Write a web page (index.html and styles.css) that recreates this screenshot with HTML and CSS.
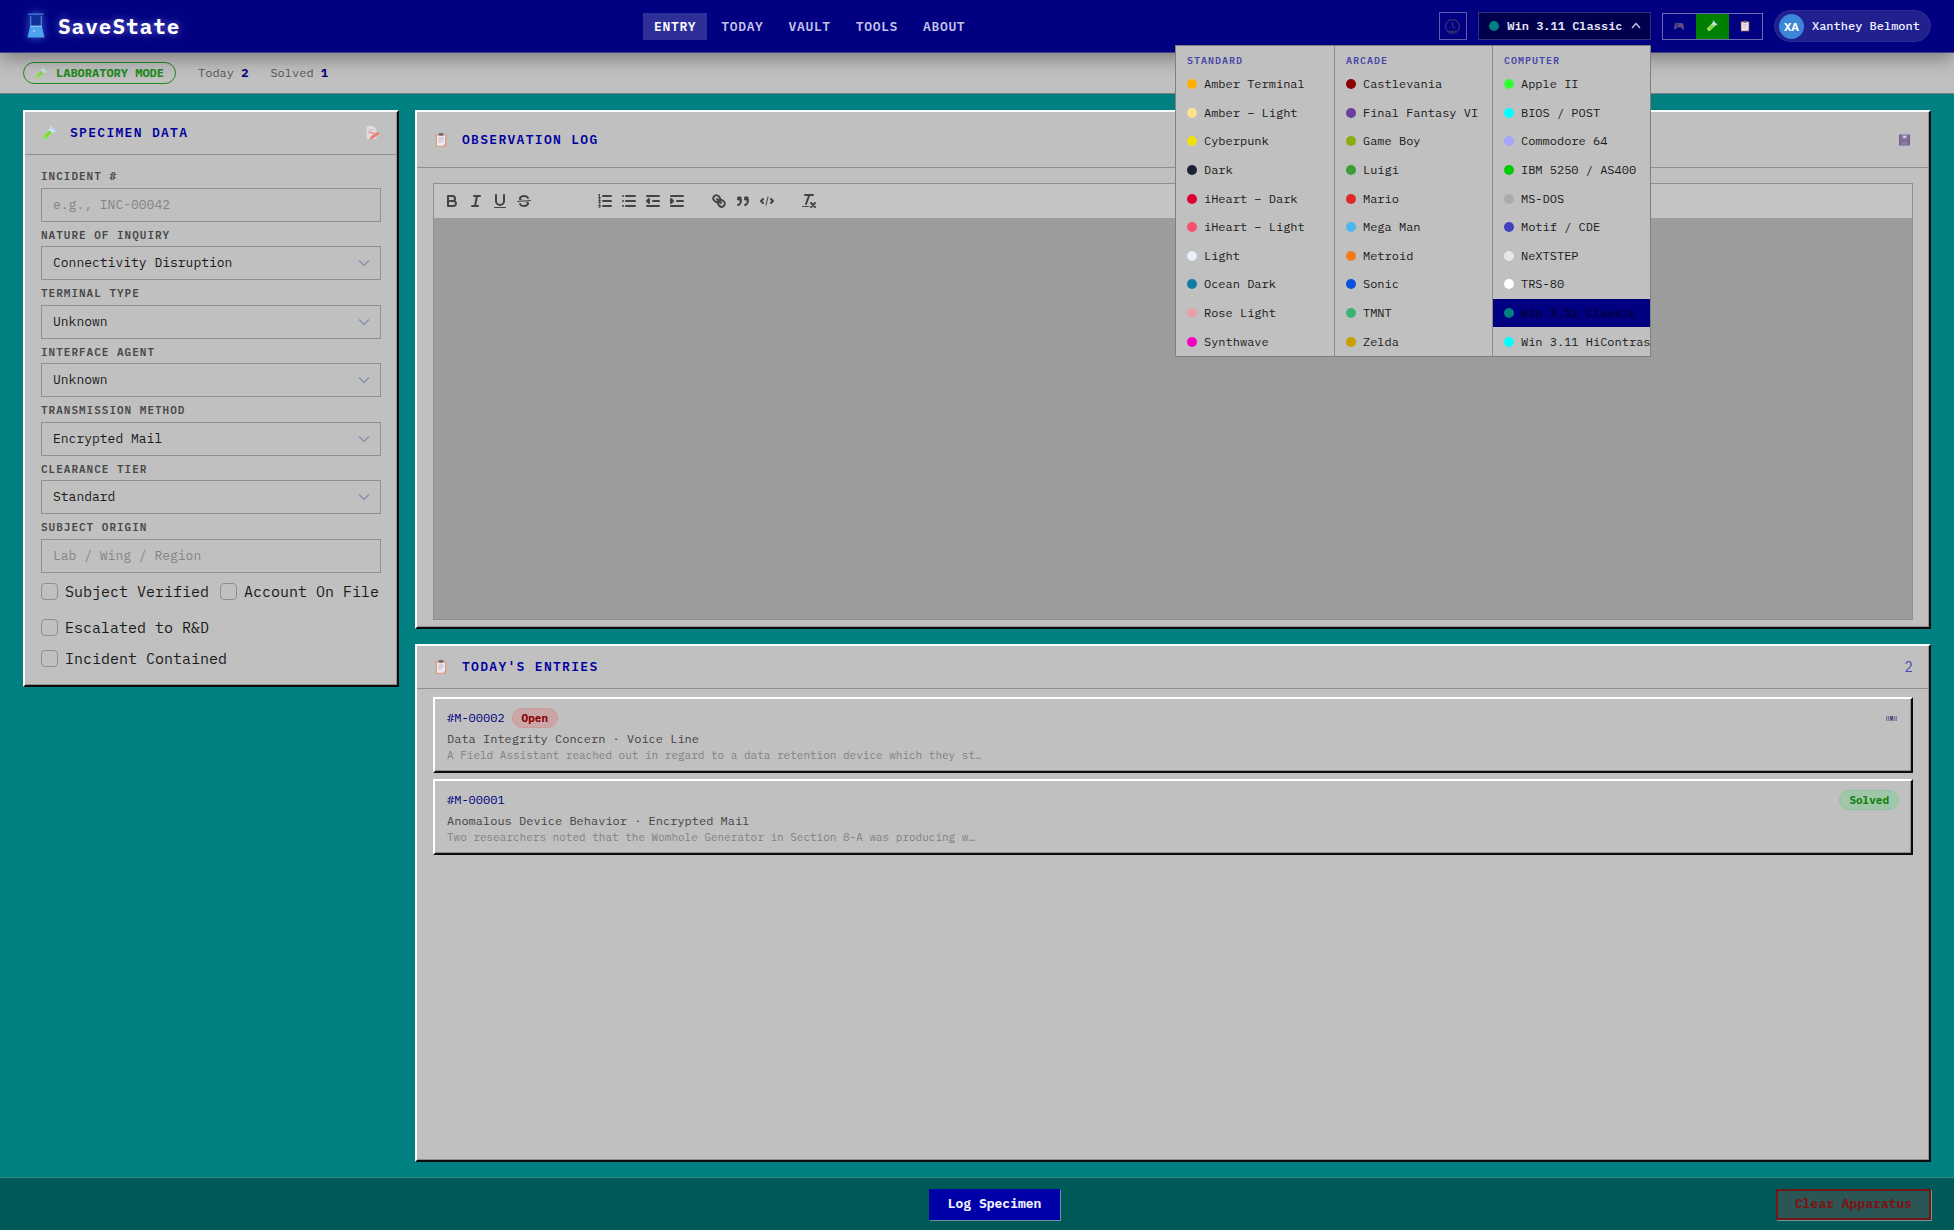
FILE: index.html
```html
<!DOCTYPE html>
<html lang="en">
<head>
<meta charset="utf-8">
<meta name="viewport" content="width=device-width, initial-scale=1">
<title>SaveState</title>
<link rel="stylesheet" href="styles.css">
</head>
<body>
<svg class="defs" aria-hidden="true">
  <symbol id="i-tube" viewBox="0 0 16 16">
    <path d="M10 2.2 13.8 6l-8 7.6a2.3 2.3 0 0 1-3.4-3.2z" fill="#c9e6ee"/>
    <path d="M7.4 5.6l4.2 2.6-5.8 5.4a2.3 2.3 0 0 1-3.4-3.2z" fill="#8fe04a"/>
    <path d="M9.6 1.6l4.8 4.8" stroke="#b8dcec" stroke-width="1.6" stroke-linecap="round"/>
    <path d="M5 9.4l.8.8M6.8 7.8l.8.8M8.6 6.2l.8.8" stroke="#39782a" stroke-width="1"/>
  </symbol>
  <symbol id="i-clip" viewBox="0 0 16 16">
    <rect x="2.5" y="2" width="11" height="13" rx="1" fill="#dda387"/>
    <path d="M4 3.4h8v8.4l-1.8 2H4z" fill="#ece6f2"/>
    <rect x="5.6" y="1" width="4.8" height="2.8" rx="1" fill="#6d6780"/>
    <path d="M5.4 6h5.2M5.4 8h5.2M5.4 10h3.4" stroke="#b9a9cc" stroke-width=".8"/>
  </symbol>
  <symbol id="i-memo" viewBox="0 0 16 16">
    <path d="M1.500 1h6.500l3.500 3.500v9.500h-10z" fill="#dedae2"/>
    <path d="M3.500 5h5" stroke="#c3b6cc" stroke-width=".8"/>
    <path d="M12.800 6.800l1.600 1.900-6.600 5-3.300.9 1.300-3z" fill="#ef8069"/>
    <path d="M3.500 6.800l7.500 2.400" stroke="#e78e7d" stroke-width="1.400"/>
  </symbol>
  <symbol id="i-pad" viewBox="0 0 16 16">
    <path d="M4.500 4h7c1.400 0 2 .9 2.300 2.400l1 4.600c.3 1.700-1.600 2.200-2.500.9L10.900 10H5.100l-1.400 1.900c-.9 1.300-2.800.8-2.500-.9l1-4.600C2.500 4.900 3.100 4 4.500 4z" fill="#564a86"/>
    <path d="M5.200 5.700v2.600M3.900 7h2.600" stroke="#252052" stroke-width=".9"/>
    <circle cx="10.300" cy="7.700" r=".8" fill="#9a4770"/><circle cx="11.700" cy="6.300" r=".8" fill="#9a4770"/>
  </symbol>
</svg>

<header class="topbar">
  <a class="brand" href="#">
    <svg class="flask" viewBox="0 0 20 28" aria-hidden="true">
      <path d="M3 2h14l-1.500 1.800V13l3 12.500h-17L4.500 13V3.800z" fill="#12309c"/>
      <path d="M4.200 14.200h11.600l2.700 11.300h-17z" fill="#4da3ee"/>
      <path d="M4.200 14.200h11.600" stroke="#8fd0ff" stroke-width="1.200"/>
      <path d="M2 2.200h15.500M4.700 4v9.500M15.300 4v9.500" stroke="#4f80d6" stroke-width="1.200"/>
      <circle cx="8" cy="19" r="1" fill="#9bd6ff"/>
    </svg>
    <span>SaveState</span>
  </a>
  <nav class="nav">
    <a class="active" href="#">ENTRY</a>
    <a href="#">TODAY</a>
    <a href="#">VAULT</a>
    <a href="#">TOOLS</a>
    <a href="#">ABOUT</a>
  </nav>
  <div class="tools">
    <button class="clock" type="button" aria-label="Clock">
      <svg viewBox="0 0 18 18" fill="none" stroke="#34346c" stroke-width="1.300"><circle cx="9" cy="9" r="7.300"/><path d="M9 4.500V9l2.800 2"/><path d="M4 14.500h10M6 13v3M9 13v3M12 13v3" stroke-width="1.100"/></svg>
    </button>
    <div class="theme">
      <button class="theme-btn" type="button" aria-expanded="true">
        <span class="dot win"></span><span>Win 3.11 Classic</span>
        <svg viewBox="0 0 10 10" fill="none" stroke="#c8c8e8" stroke-width="1.300" aria-hidden="true"><path d="M1 7l4-4.500L9 7"/></svg>
      </button>
      <div class="menu">
        <section>
          <h2>STANDARD</h2>
          <ul>
            <li><button type="button"><span class="dot" style="background:#ffb000"></span>Amber Terminal</button></li>
            <li><button type="button"><span class="dot" style="background:#ffe08a"></span>Amber – Light</button></li>
            <li><button type="button"><span class="dot" style="background:#f0e010"></span>Cyberpunk</button></li>
            <li><button type="button"><span class="dot" style="background:#1a2236"></span>Dark</button></li>
            <li><button type="button"><span class="dot" style="background:#dc0032"></span>iHeart – Dark</button></li>
            <li><button type="button"><span class="dot" style="background:#fa506e"></span>iHeart – Light</button></li>
            <li><button type="button"><span class="dot" style="background:#e8eef6"></span>Light</button></li>
            <li><button type="button"><span class="dot" style="background:#0e7da6"></span>Ocean Dark</button></li>
            <li><button type="button"><span class="dot" style="background:#e8a0a8"></span>Rose Light</button></li>
            <li><button type="button"><span class="dot" style="background:#f500c0"></span>Synthwave</button></li>
          </ul>
        </section>
        <section>
          <h2>ARCADE</h2>
          <ul>
            <li><button type="button"><span class="dot" style="background:#8b0000"></span>Castlevania</button></li>
            <li><button type="button"><span class="dot" style="background:#6b3fa0"></span>Final Fantasy VI</button></li>
            <li><button type="button"><span class="dot" style="background:#8bac0f"></span>Game Boy</button></li>
            <li><button type="button"><span class="dot" style="background:#3a9d35"></span>Luigi</button></li>
            <li><button type="button"><span class="dot" style="background:#e02828"></span>Mario</button></li>
            <li><button type="button"><span class="dot" style="background:#4ab8ec"></span>Mega Man</button></li>
            <li><button type="button"><span class="dot" style="background:#f57a1a"></span>Metroid</button></li>
            <li><button type="button"><span class="dot" style="background:#0a50dc"></span>Sonic</button></li>
            <li><button type="button"><span class="dot" style="background:#3cb371"></span>TMNT</button></li>
            <li><button type="button"><span class="dot" style="background:#c8a000"></span>Zelda</button></li>
          </ul>
        </section>
        <section>
          <h2>COMPUTER</h2>
          <ul>
            <li><button type="button"><span class="dot" style="background:#33ff33"></span>Apple II</button></li>
            <li><button type="button"><span class="dot" style="background:#00ffff"></span>BIOS / POST</button></li>
            <li><button type="button"><span class="dot" style="background:#a5a5ff"></span>Commodore 64</button></li>
            <li><button type="button"><span class="dot" style="background:#00cc00"></span>IBM 5250 / AS400</button></li>
            <li><button type="button"><span class="dot" style="background:#aaaaaa"></span>MS-DOS</button></li>
            <li><button type="button"><span class="dot" style="background:#4040c0"></span>Motif / CDE</button></li>
            <li><button type="button"><span class="dot" style="background:#e8e8e8"></span>NeXTSTEP</button></li>
            <li><button type="button"><span class="dot" style="background:#ffffff"></span>TRS-80</button></li>
            <li><button type="button" class="selected"><span class="dot win"></span>Win 3.11 Classic</button></li>
            <li><button type="button"><span class="dot" style="background:#00ffff"></span>Win 3.11 HiContrast</button></li>
          </ul>
        </section>
      </div>
    </div>
    <div class="modes">
      <button type="button" aria-label="Arcade mode"><svg><use href="#i-pad"/></svg></button>
      <button type="button" class="on" aria-label="Laboratory mode"><svg><use href="#i-tube"/></svg></button>
      <button type="button" aria-label="Clipboard mode"><svg><use href="#i-clip"/></svg></button>
    </div>
    <button class="user" type="button"><span class="avatar">XA</span><span>Xanthey Belmont</span></button>
  </div>
</header>

<div class="status">
  <span class="mode"><svg aria-hidden="true"><use href="#i-tube"/></svg>LABORATORY MODE</span>
  <span class="stat">Today <b>2</b></span>
  <span class="stat">Solved <b>1</b></span>
</div>

<main class="main">
  <form class="panel specimen">
    <div class="panel-head">
      <h1><svg aria-hidden="true"><use href="#i-tube"/></svg>SPECIMEN DATA</h1>
      <svg aria-hidden="true"><use href="#i-memo"/></svg>
    </div>
    <div class="fields">
      <div class="field"><label for="inc">INCIDENT #</label><input id="inc" type="text" placeholder="e.g., INC-00042"></div>
      <div class="field"><label for="nat">NATURE OF INQUIRY</label><select id="nat"><option>Connectivity Disruption</option></select></div>
      <div class="field"><label for="ter">TERMINAL TYPE</label><select id="ter"><option>Unknown</option></select></div>
      <div class="field"><label for="age">INTERFACE AGENT</label><select id="age"><option>Unknown</option></select></div>
      <div class="field"><label for="tra">TRANSMISSION METHOD</label><select id="tra"><option>Encrypted Mail</option></select></div>
      <div class="field"><label for="cle">CLEARANCE TIER</label><select id="cle"><option>Standard</option></select></div>
      <div class="field"><label for="ori">SUBJECT ORIGIN</label><input id="ori" type="text" placeholder="Lab / Wing / Region"></div>
    </div>
    <div class="checks">
      <label><input type="checkbox">Subject Verified</label>
      <label><input type="checkbox">Account On File</label>
      <label><input type="checkbox">Escalated to R&amp;D</label>
    </div>
    <div class="checks last">
      <label><input type="checkbox">Incident Contained</label>
    </div>
  </form>

  <div class="column">
    <section class="panel log">
      <div class="panel-head tall">
        <h1><svg aria-hidden="true"><use href="#i-clip"/></svg>OBSERVATION LOG</h1>
        <svg viewBox="0 0 16 16" aria-hidden="true"><rect x="2" y="2.500" width="11" height="11" rx=".6" fill="#75658c"/><rect x="4.500" y="3" width="6" height="4.500" fill="#8f81a6"/><rect x="6.200" y="3.800" width="3" height="1.800" fill="#e4deee"/><path d="M4 9h7v4.500H4z" fill="#8779a0"/></svg>
      </div>
      <div class="editor">
        <div class="toolbar">
          <div class="group">
            <button type="button" aria-label="Bold"><svg viewBox="0 0 18 18"><path d="M5,4H9.500A2.500,2.500,0,0,1,12,6.500v0A2.500,2.500,0,0,1,9.500,9H5V4Z"/><path d="M5,9h5.500A2.500,2.500,0,0,1,13,11.500v0A2.500,2.500,0,0,1,10.500,14H5V9Z"/></svg></button>
            <button type="button" aria-label="Italic"><svg viewBox="0 0 18 18"><path d="M7 4h6M5 14h6M8 14l2-10"/></svg></button>
            <button type="button" aria-label="Underline"><svg viewBox="0 0 18 18"><path d="M5,3V9a4,4,0,0,0,4,4H9a4,4,0,0,0,4-4V3"/><rect class="f" x="3" y="15" width="12" height="1" rx=".5"/></svg></button>
            <button type="button" aria-label="Strike"><svg viewBox="0 0 18 18"><path class="t" d="M15.500 8.500L2.500 9.500"/><path class="f" d="M9.007,8C6.542,7.791,6,7.519,6,6.500,6,5.792,7.283,5,9,5c1.571,0,2.765.679,2.969,1.309a1,1,0,0,0,1.900-.617C13.356,4.106,11.354,3,9,3,6.200,3,4,4.538,4,6.500a3.200,3.200,0,0,0,.5,1.843Z"/><path class="f" d="M8.984,10C11.457,10.208,12,10.479,12,11.500c0,.708-1.283,1.500-3,1.500-1.571,0-2.765-.679-2.969-1.309a1,1,0,1,0-1.900.617C4.644,13.894,6.646,15,9,15c2.800,0,5-1.538,5-3.500a3.200,3.200,0,0,0-.5-1.843Z"/></svg></button>
          </div>
          <div class="group blank"></div>
          <div class="group">
            <button type="button" aria-label="Ordered list"><svg viewBox="0 0 18 18"><path d="M7 4h8M7 9h8M7 14h8"/><path d="M3.500 3v11" class="n"/><path class="t" d="M2.300 3l1.200-.6V6M2.500 5.800h2M4.500,10.500h-2c0-.234,1.850-1.076,1.850-2.234A.959,.959,0,0,0,2.500,8.156M2.500,14.846a.959,.959,0,0,0,1.850-.109A.7,.7,0,0,0,3.750,14a.688,.688,0,0,0,.6-.736,.959,.959,0,0,0-1.850-.109"/></svg></button>
            <button type="button" aria-label="Bullet list"><svg viewBox="0 0 18 18"><path d="M6 4h9M6 9h9M6 14h9M3 4h0M3 9h0M3 14h0"/></svg></button>
            <button type="button" aria-label="Outdent"><svg viewBox="0 0 18 18"><path d="M3 14h12M3 4h12M9 9h6M5 7v4L3 9z"/></svg></button>
            <button type="button" aria-label="Indent"><svg viewBox="0 0 18 18"><path d="M3 14h12M3 4h12M9 9h6M3 7v4l2-2z"/></svg></button>
          </div>
          <div class="group">
            <button type="button" aria-label="Link"><svg viewBox="0 0 18 18"><path d="M7 7l4 4M8.900,4.577a3.476,3.476,0,0,1,.36,4.679A3.476,3.476,0,0,1,4.577,8.900C3.185,7.500,2.035,6.400,4.217,4.217S7.500,3.185,8.900,4.577ZM13.423,9.100a3.476,3.476,0,0,0-4.679-.36,3.476,3.476,0,0,0,.36,4.679c1.392,1.392,2.500,2.542,4.679.36S14.815,10.500,13.423,9.100Z"/></svg></button>
            <button type="button" aria-label="Quote"><svg viewBox="0 0 18 18"><path class="q" d="M4 5h3v3H4zM11 5h3v3h-3z"/><path d="M7,8c0,4.031-3,5-3,5M14,8c0,4.031-3,5-3,5"/></svg></button>
            <button type="button" aria-label="Code"><svg viewBox="0 0 18 18"><path d="M5 7L3 9l2 2M13 7l2 2-2 2"/><path class="t" d="M10 5L8 13"/></svg></button>
          </div>
          <div class="group">
            <button type="button" aria-label="Clear formatting"><svg viewBox="0 0 18 18"><path d="M5 3h8M6 12L9.350 3M11 11l4 4M15 11l-4 4"/><rect class="f" x="2" y="14" width="7" height="1" rx=".5"/></svg></button>
          </div>
        </div>
        <textarea class="pad" aria-label="Observation log"></textarea>
      </div>
    </section>

    <section class="panel entries">
      <div class="panel-head">
        <h1><svg aria-hidden="true"><use href="#i-clip"/></svg>TODAY'S ENTRIES</h1>
        <span class="count">2</span>
      </div>
      <div class="list">
        <article class="card">
          <div class="card-top"><span class="id">#M-00002</span><span class="badge open">Open</span>
            <svg class="tail" viewBox="0 0 14 14" aria-hidden="true"><rect x="1" y="5" width="11" height="5" fill="#85799a"/><path d="M2.500 5v5M4.500 5v5M8.500 5v5M10.500 5v5" stroke="#b0a6c0" stroke-width=".8"/><path d="M5.500 5.500L6.500 9l1-3.500" stroke="#3f3654" stroke-width="1" fill="none"/></svg>
          </div>
          <p class="meta">Data Integrity Concern · Voice Line</p>
          <p class="text">A Field Assistant reached out in regard to a data retention device which they st…</p>
        </article>
        <article class="card">
          <div class="card-top"><span class="id">#M-00001</span><span class="badge solved tail">Solved</span></div>
          <p class="meta">Anomalous Device Behavior · Encrypted Mail</p>
          <p class="text">Two researchers noted that the Womhole Generator in Section 8-A was producing w…</p>
        </article>
      </div>
    </section>
  </div>
</main>

<footer class="footer">
  <span class="note"></span>
  <button class="btn primary" type="button">Log Specimen</button>
  <button class="btn danger" type="button">Clear Apparatus</button>
</footer>
</body>
</html>
```
FILE: styles.css
```css
* { box-sizing: border-box; }

body {
  margin: 0;
  min-height: 100vh;
  display: flex;
  flex-direction: column;
  background: #008080;
  color: #1a1a1a;
  font: 12px/16px "IBM Plex Mono", "Liberation Mono", monospace;
}

button, input, select, textarea { font: inherit; color: inherit; margin: 0; }
button { border: 0; padding: 0; background: none; }
h1, h2, p, ul { margin: 0; padding: 0; }
ul { list-style: none; }
a { color: inherit; text-decoration: none; }
svg { display: block; flex: none; }
.defs { position: absolute; width: 0; height: 0; }

/* Top bar */
.topbar {
  position: relative;
  z-index: 2;
  display: flex;
  align-items: center;
  justify-content: space-between;
  height: 53px;
  padding: 0 23px;
  background: #000080;
  border-bottom: 1px solid #404080;
  box-shadow: 0 4px 20px rgba(0, 0, 0, .4);
}
.brand {
  display: flex;
  align-items: center;
  gap: 12px;
  padding-left: 3px;
  color: #fff;
  font-size: 21px;
  line-height: 28px;
  font-weight: 700;
  letter-spacing: 1px;
  text-shadow: 0 0 8px rgba(160, 160, 255, .7);
}
.flask { width: 20px; height: 28px; filter: drop-shadow(0 0 4px rgba(90, 160, 255, .6)); }
.nav { display: flex; gap: 3px; }
.nav a {
  padding: 5px 11px;
  color: #c2c2ea;
  font-size: 13px;
  line-height: 17px;
  font-weight: 600;
  letter-spacing: .05em;
}
.nav .active { background: #2e2e98; color: #fff; }
.tools { display: flex; align-items: center; gap: 11px; }
.clock {
  display: grid;
  place-items: center;
  width: 28px;
  height: 28px;
  border: 1px solid #5a5aa8;
}
.clock svg { width: 17px; height: 17px; }
.theme { position: relative; }
.theme-btn {
  display: flex;
  align-items: center;
  justify-content: space-between;
  width: 173px;
  height: 28px;
  padding: 0 9px 0 10px;
  border: 1px solid #30307c;
  background: #00004e;
  color: #e8e8f8;
  font-weight: 600;
}
.theme-btn svg { width: 10px; height: 10px; }
.dot { width: 10px; height: 10px; flex: none; border-radius: 50%; }
.dot.win { background: #008080; }
.modes { display: flex; border: 1px solid #6a6ab0; }
.modes button { display: grid; place-items: center; width: 33px; height: 25px; }
.modes svg { width: 12px; height: 12px; }
.modes .on { background: #008000; }
.user {
  display: flex;
  align-items: center;
  gap: 8px;
  height: 32px;
  padding: 0 10px 0 4px;
  border: 1px solid #2c2c98;
  border-radius: 16px;
  background: #20208e;
  color: #f0f0ff;
  font-weight: 500;
}
.avatar {
  width: 25px;
  border-radius: 50%;
  background: #3b86d8;
  color: #fff;
  font: 700 11px/25px "Noto Sans", sans-serif;
  text-align: center;
}

/* Theme menu */
.menu {
  position: absolute;
  top: 33px;
  right: 0;
  display: grid;
  grid-template-columns: repeat(3, 158px);
  min-height: 312px;
  overflow: hidden;
  border: 1px solid #808080;
  background: #c0c0c0;
  color: #1a1a1a;
}
.menu section { display: flex; flex-direction: column; overflow: hidden; }
.menu section + section { border-left: 1px solid #8c8c8c; }
.menu h2 {
  padding: 8px 11px 2px;
  color: #4646a8;
  font-size: 10px;
  line-height: 14px;
  font-weight: 600;
  letter-spacing: 1px;
}
.menu ul { flex: 1; display: grid; grid-auto-rows: 1fr; }
.menu li { display: flex; }
.menu button {
  flex: 1;
  display: flex;
  align-items: center;
  gap: 7px;
  padding: 0 11px;
  white-space: nowrap;
}
.menu .selected { background: #000080; color: #00003c; font-weight: 600; }

/* Status strip */
.status {
  display: flex;
  align-items: center;
  gap: 22px;
  height: 41px;
  padding: 0 23px;
  background: #c0c0c0;
  border-bottom: 1px solid #808080;
  color: #555;
}
.mode {
  display: flex;
  align-items: center;
  gap: 8px;
  padding: 2px 11px 2px 10px;
  border: 1px solid #1f8a1f;
  border-radius: 11px;
  color: #1f8a1f;
  font-weight: 700;
}
.mode svg { width: 14px; height: 14px; opacity: .8; }
.stat b { color: #000080; }

/* Layout */
.main {
  flex: 1;
  display: grid;
  grid-template-columns: 376px minmax(0, 1fr);
  gap: 16px;
  padding: 16px 23px 15px;
}
.column { display: grid; grid-template-rows: 1fr 1fr; gap: 15px; }
.panel {
  display: flex;
  flex-direction: column;
  border: 2px solid;
  border-color: #fff #0c0c0c #0c0c0c #fff;
  background: #c0c0c0;
  box-shadow: inset -1px -1px #909090;
}
.panel-head {
  display: flex;
  align-items: center;
  justify-content: space-between;
  min-height: 43px;
  padding: 0 16px;
  border-bottom: 1px solid #909090;
}
.panel-head.tall { min-height: 56px; }
.panel-head h1 {
  display: flex;
  align-items: center;
  gap: 13px;
  color: #0000a0;
  font-size: 13px;
  line-height: 20px;
  font-weight: 600;
  letter-spacing: .1em;
}
.panel-head svg { width: 16px; height: 16px; }

/* Specimen form */
.specimen { align-self: start; padding-bottom: 15px; }
.fields { display: flex; flex-direction: column; gap: 6px; padding: 14px 16px 8px; }
.field { display: flex; flex-direction: column; gap: 4px; }
.field label {
  color: #484848;
  font-size: 11px;
  line-height: 1.32;
  font-weight: 600;
  letter-spacing: 1px;
}
.field input, .field select {
  width: 100%;
  height: 34px;
  padding: 0 11px;
  border: 1px solid #909090;
  border-radius: 0;
  background: transparent;
  font-size: 13px;
  appearance: none;
}
.field input::placeholder { color: #858585; opacity: 1; }
.field select {
  background: url("data:image/svg+xml,%3Csvg xmlns='http://www.w3.org/2000/svg' viewBox='0 0 12 12' fill='none' stroke='%238494a8' stroke-width='1.500'%3E%3Cpath d='M1 3.500l5 5 5-5'/%3E%3C/svg%3E") no-repeat right 10px center / 12px 12px;
}
.checks { display: flex; flex-wrap: wrap; gap: 14px 11px; padding: 0 16px; font-size: 15px; line-height: 22px; }
.checks.last { padding-top: 9px; }
.checks label { display: flex; align-items: center; gap: 7px; }
.checks input {
  width: 17px;
  height: 17px;
  border: 1px solid #8f8f8f;
  border-radius: 4px;
  appearance: none;
}

/* Editor */
.editor {
  flex: 1;
  display: flex;
  flex-direction: column;
  margin: 15px 16px 7px;
  border: 1px solid #909090;
}
.toolbar { display: flex; gap: 18px; padding: 5px 6px; background: #c4c4c4; }
.group { display: flex; }
.group.blank { width: 21px; }
.group button { width: 24px; height: 24px; padding: 3px; }
.group svg { width: 18px; height: 18px; fill: none; stroke: #444; stroke-width: 2; stroke-linecap: round; stroke-linejoin: round; }
.group .t { stroke-width: 1; }
.group .n { stroke-width: 1; stroke-dasharray: 3 2; }
.group .f { fill: #444; stroke: none; }
.group .q { fill: #444; stroke-width: 1; }
.pad { flex: 1; width: 100%; border: 0; resize: none; background: #9c9c9c; outline: none; }

/* Entries */
.count { color: #4848b8; font-size: 14px; }
.list { display: flex; flex-direction: column; gap: 6px; padding: 8px 16px; }
.card {
  padding: 9px 12px 8px;
  border: 2px solid;
  border-color: #fff #0c0c0c #0c0c0c #fff;
  box-shadow: inset -1px -1px #909090;
}
.card-top { display: flex; align-items: center; gap: 7px; height: 20px; margin-bottom: 3px; }
.tail { margin-left: auto; }
.card svg { width: 14px; height: 14px; }
.id { color: #000080; }
.badge { padding: 0 9px; border: 1px solid; border-radius: 10px; font-size: 11px; line-height: 18px; font-weight: 700; }
.open { border-color: #cf9a9a; background: #cba6a6; color: #8b0000; }
.solved { border-color: #92c49c; background: #9fc6a6; color: #128012; }
.meta { color: #444; }
.text { color: #828282; font-size: 11px; }

/* Footer */
.footer {
  display: flex;
  align-items: center;
  justify-content: space-between;
  height: 53px;
  padding: 0 23px;
  border-top: 1px solid #408888;
  background: #005a5a;
}
.note { width: 190px; }
.btn {
  height: 31px;
  padding: 0 17px;
  border: 2px solid #0000a8;
  font-size: 13px;
  font-weight: 700;
}
.primary { background: #0000a8; color: #f0f0ff; box-shadow: 1px 1px #7090a8; }
.danger { border-color: #701818; background: #2a5656; color: #7c1414; box-shadow: 1px 1px #809090; }
```
